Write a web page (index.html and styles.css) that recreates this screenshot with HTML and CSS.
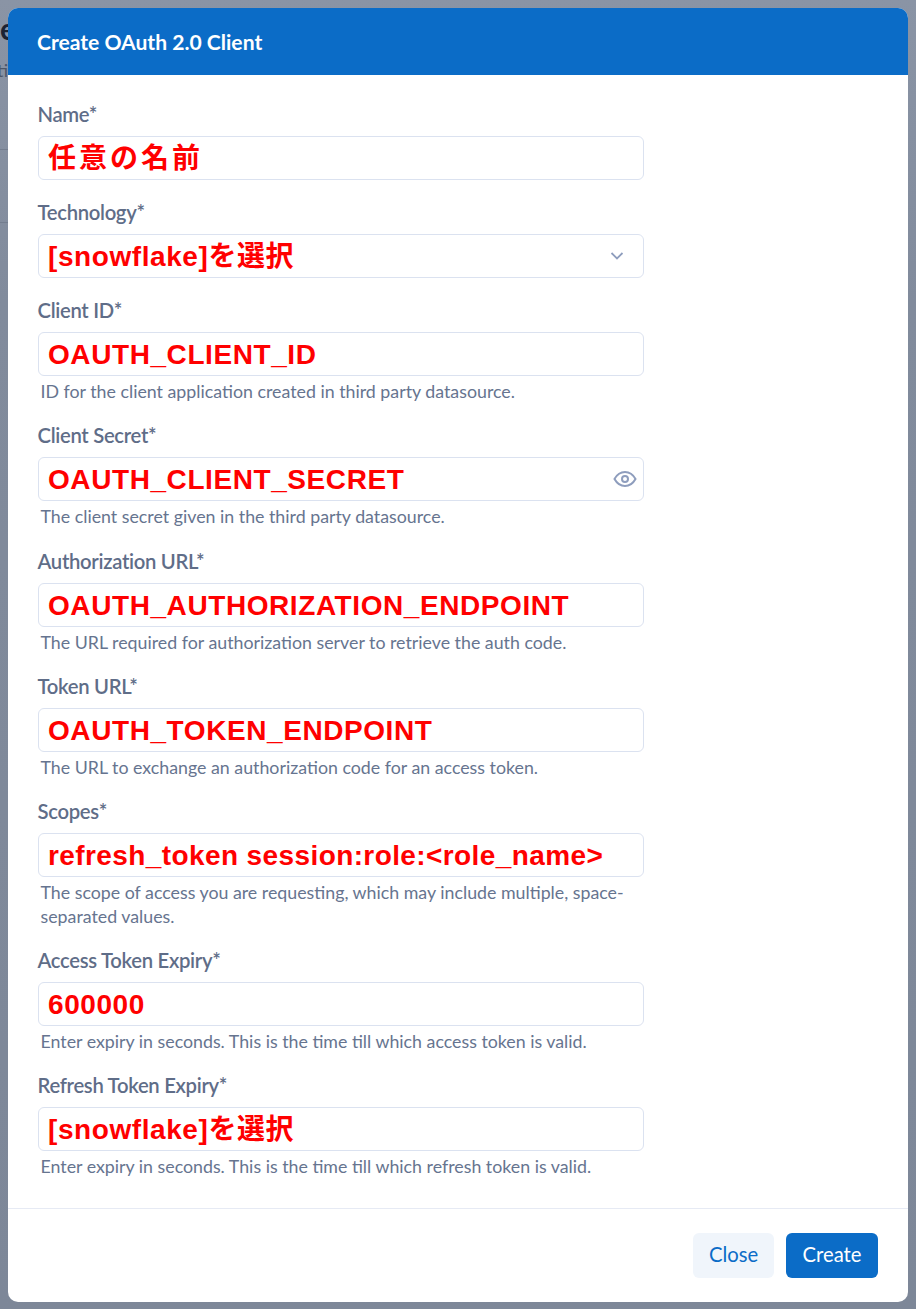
FILE: index.html
```html
<!DOCTYPE html>
<html lang="ja">
<head>
<meta charset="utf-8">
<title>Create OAuth 2.0 Client</title>
<link rel="stylesheet" href="styles.css">
</head>
<body>
<div class="backdrop">
  <span class="bg-title">e</span>
  <span class="bg-sub">ti</span>
  <i class="bg-line one"></i>
  <i class="bg-line two"></i>
</div>
<main class="modal">
  <header class="modal-head"><h1>Create OAuth 2.0 Client</h1></header>
  <form class="modal-body">
    <div class="field">
      <label>Name*</label>
      <div class="input"><span class="note jp">任意の名前</span></div>
    </div>
    <div class="field">
      <label>Technology*</label>
      <div class="input"><span class="note">[snowflake]を選択</span>
        <svg class="chev" viewBox="0 0 14 10" width="14" height="10"><path d="M1.500 2 7 7.500 12.500 2" fill="none" stroke="#8e9dbd" stroke-width="1.800"/></svg>
      </div>
    </div>
    <div class="field">
      <label>Client ID*</label>
      <div class="input"><span class="note">OAUTH_CLIENT_ID</span></div>
      <p class="help">ID for the client application created in third party datasource.</p>
    </div>
    <div class="field">
      <label>Client Secret*</label>
      <div class="input"><span class="note">OAUTH_CLIENT_SECRET</span>
        <svg class="eye" viewBox="0 0 24 24" width="24" height="24"><path d="M1.500 12C4 7.500 7.800 5 12 5s8 2.500 10.500 7c-2.500 4.500-6.300 7-10.500 7s-8-2.500-10.500-7Z" fill="none" stroke="#8e9dbd" stroke-width="2"/><circle cx="12" cy="12" r="3" fill="none" stroke="#8e9dbd" stroke-width="2"/></svg>
      </div>
      <p class="help">The client secret given in the third party datasource.</p>
    </div>
    <div class="field">
      <label>Authorization URL*</label>
      <div class="input"><span class="note">OAUTH_AUTHORIZATION_ENDPOINT</span></div>
      <p class="help">The URL required for authorization server to retrieve the auth code.</p>
    </div>
    <div class="field">
      <label>Token URL*</label>
      <div class="input"><span class="note">OAUTH_TOKEN_ENDPOINT</span></div>
      <p class="help">The URL to exchange an authorization code for an access token.</p>
    </div>
    <div class="field">
      <label>Scopes*</label>
      <div class="input"><span class="note tight">refresh_token session:role:&lt;role_name&gt;</span></div>
      <p class="help">The scope of access you are requesting, which may include multiple, space-separated values.</p>
    </div>
    <div class="field">
      <label>Access Token Expiry*</label>
      <div class="input"><span class="note">600000</span></div>
      <p class="help">Enter expiry in seconds. This is the time till which access token is valid.</p>
    </div>
    <div class="field">
      <label>Refresh Token Expiry*</label>
      <div class="input"><span class="note">[snowflake]を選択</span></div>
      <p class="help">Enter expiry in seconds. This is the time till which refresh token is valid.</p>
    </div>
  </form>
  <footer class="modal-foot">
    <button type="button" class="btn ghost">Close</button>
    <button type="button" class="btn primary">Create</button>
  </footer>
</main>
</body>
</html>
```
FILE: styles.css
```css
* { box-sizing: border-box; }
html, body { margin: 0; height: 100%; }
body {
  position: relative;
  height: 1309px;
  overflow: hidden;
  padding: 8px;
  background: #7d8798;
  font-family: "Lato", "Noto Sans", sans-serif;
}
.backdrop {
  position: absolute;
  inset: 0;
  background: linear-gradient(180deg, #8a94a5 0, #818b9c 300px, #7d8798 1309px);
}
.bg-title { position: absolute; left: 0; top: 10px; font: 700 30px/36px "Lato", sans-serif; color: #1c2333; }
.bg-sub { position: absolute; left: -3px; top: 58px; font: 400 18px/24px "Lato", sans-serif; color: #4d5668; }
.bg-line { position: absolute; left: 0; width: 8px; height: 1px; background: #747e8f; }
.bg-line.one { top: 149px; }
.bg-line.two { top: 222px; }
.modal {
  position: relative;
  display: flex;
  flex-direction: column;
  width: 900px;
  height: 1294px;
  background: #fff;
  border-radius: 10px;
  overflow: hidden;
}
.modal-head {
  height: 67px;
  padding: 0 29px;
  display: flex;
  align-items: center;
  background: #0b6cc7;
  flex: none;
}
.modal-head h1 { margin: 0; font-size: 21.1px; line-height: 28px; font-weight: 700; color: #fff; }
.modal-body {
  flex: 1;
  padding: 27px 30px 0;
  display: flex;
  flex-direction: column;
  gap: 20.15px;
  border-bottom: 1px solid #e6eaf4;
}
.field { width: 606px; }
.field label {
  display: block;
  height: 24px;
  margin: 0 0 10px -0.5px;
  font-size: 20.25px;
  line-height: 24px;
  font-weight: 600;
  letter-spacing: -0.3px;
  color: #5f6d88;
}
.input {
  height: 44px;
  padding: 0 9px;
  display: flex;
  align-items: center;
  justify-content: space-between;
  background: #fff;
  border: 1px solid #dbe2f0;
  border-radius: 6px;
}
.note {
  margin-top: 2px;
  font-family: "Liberation Sans", "Noto Sans CJK JP", sans-serif;
  font-size: 28px;
  line-height: 32px;
  font-weight: 700;
  letter-spacing: 0.58px;
  color: #f00;
  white-space: nowrap;
}
.note.jp { letter-spacing: 3px; }
.note.tight { letter-spacing: 0.4px; }
.chev { margin-right: 10px; }
.eye { margin-right: -3px; }
.help {
  margin: 3px 0 0;
  padding-left: 2.5px;
  font-size: 17.8px;
  line-height: 24px;
  color: #66748f;
}
.modal-foot {
  flex: none;
  height: 93px;
  padding: 24px 30px 0;
  display: flex;
  justify-content: flex-end;
  align-items: flex-start;
  gap: 12px;
}
.btn {
  height: 45px;
  padding: 0 0 3px;
  border: 0;
  border-radius: 6px;
  font-family: inherit;
  font-size: 20.25px;
  font-weight: 400;
}
.btn.ghost { width: 81px; background: #f0f5fb; color: #0b6cc7; }
.btn.primary { width: 92px; background: #0b6cc7; color: #fff; }
```
